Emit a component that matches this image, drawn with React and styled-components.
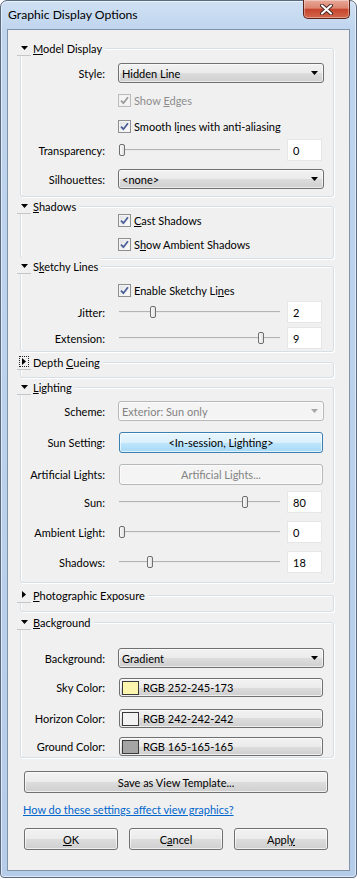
import React from 'react'
import styled, { createGlobalStyle } from 'styled-components'

const GlobalStyle = createGlobalStyle`
  html, body {
    margin: 0;
    padding: 0;
    background: #fff;
  }
  body {
    font-family: Lato, "Noto Sans", "Liberation Sans", sans-serif;
    font-size: 11px;
    color: #000;
  }
`

const Window = styled.div`
  box-sizing: border-box;
  width: 357px;
  height: 878px;
  border: 1px solid #5a6b80;
  border-radius: 7px 7px 4px 4px;
  background: linear-gradient(180deg, #cfe0f3 0px, #bfd5ee 30px, #b6cdea 100%);
  box-shadow: inset 0 0 0 1px rgba(255, 255, 255, 0.55);
  display: flex;
  flex-direction: column;
`

const TitleBar = styled.div`
  height: 28px;
  display: flex;
  justify-content: space-between;
  align-items: flex-start;
  padding-left: 7px;
`

const Title = styled.div`
  font-size: 12.2px;
  line-height: 16px;
  margin-top: 6px;
`

const CloseButton = styled.div`
  box-sizing: border-box;
  width: 47px;
  height: 19px;
  margin: -1px 6px 0 0;
  border: 1px solid #5e2218;
  border-top: none;
  border-radius: 0 0 5px 5px;
  background: linear-gradient(180deg, #e9a898 0%, #dc8670 45%, #c7452d 52%, #d2684c 100%);
  box-shadow: inset 0 0 0 1px rgba(255, 255, 255, 0.35);
  display: flex;
  align-items: center;
  justify-content: center;
`

const Client = styled.div`
  flex: 1;
  margin: 0 6px 6px 6px;
  border: 1px solid #8193a9;
  background: #f0f0f0;
  padding-left: 12px;
  display: flex;
  flex-direction: column;
`

const Box = styled.div`
  box-sizing: border-box;
  width: 314px;
  margin-top: ${p => p.$mt}px;
  padding: 0 9px ${p => p.$pb}px 0;
  border: 1px solid #d5dfe5;
  border-radius: 3px;
  box-shadow: inset 1px 1px 0 #fff, 1px 1px 0 #fff;
  display: flex;
  flex-direction: column;
`

const Header = styled.div`
  align-self: flex-start;
  height: 16px;
  margin: -9px 0 0 -4px;
  padding-right: 3px;
  background: #f0f0f0;
  display: flex;
  align-items: center;
`

const Toggle = styled.span`
  box-sizing: border-box;
  width: 14px;
  height: 16px;
  margin-right: 2px;
  border-bottom: 1px solid #c6c6c6;
  display: flex;
  align-items: center;
  justify-content: center;
`

const Focus = styled.span`
  box-sizing: border-box;
  width: 10px;
  height: 11px;
  border: 1px dotted #222;
  display: flex;
  align-items: center;
  justify-content: center;
`

const Key = styled.span`
  text-decoration: underline;
  text-underline-offset: 1px;
`

const Row = styled.div`
  display: flex;
  align-items: center;
  height: ${p => p.$h}px;
  margin-top: ${p => p.$mt}px;
  padding-left: ${p => (p.$indent ? 97 : 0)}px;
`

const Label = styled.span`
  width: 84px;
  margin-right: 13px;
  text-align: right;
  white-space: nowrap;
`

const CheckBox = styled.span`
  box-sizing: border-box;
  width: 13px;
  height: 13px;
  border: 1px solid ${p => (p.$disabled ? '#bcbcbc' : '#8e8f8f')};
  background: ${p =>
    p.$disabled
      ? '#f4f4f4'
      : 'linear-gradient(135deg, #dcdee2 0%, #f4f4f4 60%, #fcfcfc 100%)'};
  box-shadow: inset 0 0 0 1px ${p => (p.$disabled ? '#f0f0f0' : '#f4f4f4')};
  display: flex;
  align-items: center;
  justify-content: center;
`

const CheckText = styled.span`
  margin-left: 3px;
  color: ${p => (p.$disabled ? '#8d8d8d' : '#000')};
`

const Select = styled.div`
  box-sizing: border-box;
  width: 206px;
  height: 20px;
  padding: 0 5px 0 3px;
  border: 1px solid ${p => (p.$disabled ? '#b5b9bc' : '#707070')};
  border-radius: 3px;
  color: ${p => (p.$disabled ? '#838383' : '#000')};
  background: ${p =>
    p.$disabled
      ? '#f4f4f4'
      : 'linear-gradient(180deg, #f2f2f2 0%, #ebebeb 50%, #dddddd 50%, #cfcfcf 100%)'};
  box-shadow: inset 0 0 0 1px rgba(255, 255, 255, 0.6);
  display: flex;
  align-items: center;
  justify-content: space-between;
`

const Button = styled.div`
  box-sizing: border-box;
  width: ${p => p.$w}px;
  height: ${p => p.$h || 22}px;
  margin-left: ${p => p.$ml || 0}px;
  padding: 0 2px;
  border: 1px solid ${p => (p.$hot ? '#3c7fb1' : p.$disabled ? '#b5b9bc' : '#707070')};
  border-radius: 3px;
  color: ${p => (p.$disabled ? '#838383' : '#000')};
  background: ${p =>
    p.$hot
      ? 'linear-gradient(180deg, #eaf6fd 0%, #d9f0fc 50%, #bee6fd 50%, #a7d9f5 100%)'
      : p.$disabled
      ? '#f4f4f4'
      : 'linear-gradient(180deg, #f2f2f2 0%, #ebebeb 50%, #dddddd 50%, #cfcfcf 100%)'};
  box-shadow: inset 0 0 0 1px rgba(255, 255, 255, 0.65);
  display: flex;
  align-items: center;
  justify-content: ${p => (p.$left ? 'flex-start' : 'center')};
`

const Swatch = styled.span`
  box-sizing: border-box;
  width: 17px;
  height: 14px;
  margin-right: 4px;
  border: 1px solid #3a3a3a;
  background: ${p => p.$color};
`

const Slider = styled.div`
  position: relative;
  width: 161px;
  height: 14px;
  margin-left: 1px;
  display: flex;
  align-items: center;
`

const Track = styled.div`
  width: 100%;
  height: 1px;
  border-top: 1px solid #b3b3b3;
  background: #e7eaea;
`

const Thumb = styled.div`
  position: absolute;
  top: 1px;
  box-sizing: border-box;
  width: 6px;
  height: 12px;
  border: 1px solid #6f6f6f;
  border-radius: 2px;
  background: linear-gradient(90deg, #fafafa 0%, #e2e2e2 100%);
`

const NumBox = styled.div`
  box-sizing: border-box;
  width: 35px;
  height: 22px;
  margin-left: 7px;
  padding-left: 5px;
  border: 1px solid #e6e6e6;
  background: #fff;
  display: flex;
  align-items: center;
`

const Footer = styled.div`
  display: flex;
  flex-direction: column;
  padding-left: 4px;
`

const LinkText = styled.span`
  margin: 9px 0 0 -1px;
  height: 15px;
  line-height: 15px;
  color: #0066cc;
  text-decoration: underline;
  text-underline-offset: 1px;
`

const ButtonRow = styled.div`
  display: flex;
  gap: 11px;
  margin-top: 11px;
`

const DownTri = ({ color = '#000' }) => (
  <svg width="7" height="4" viewBox="0 0 7 4">
    <polygon points="0,0 7,0 3.5,4" fill={color} />
  </svg>
)

const RightTri = () => (
  <svg width="4" height="7" viewBox="0 0 4 7">
    <polygon points="0,0 4,3.5 0,7" fill="#000" />
  </svg>
)

const Check = ({ disabled }) => (
  <svg width="9" height="9" viewBox="0 0 9 9">
    <path
      d="M1 4.6 L3.4 7.2 L8 1.2"
      fill="none"
      stroke={disabled ? '#9a9a9a' : '#4a5f97'}
      strokeWidth="1.8"
    />
  </svg>
)

const Section = ({ title, open = true, focus, mt, pb, children }) => (
  <Box $mt={mt} $pb={pb}>
    <Header>
      <Toggle>
        {focus ? (
          <Focus>
            <RightTri />
          </Focus>
        ) : open ? (
          <DownTri />
        ) : (
          <RightTri />
        )}
      </Toggle>
      <span>{title}</span>
    </Header>
    {children}
  </Box>
)

const CheckRow = ({ mt, disabled, children }) => (
  <Row $h={13} $mt={mt} $indent>
    <CheckBox $disabled={disabled}>
      <Check disabled={disabled} />
    </CheckBox>
    <CheckText $disabled={disabled}>{children}</CheckText>
  </Row>
)

const SliderRow = ({ mt, label, value, max }) => (
  <Row $h={22} $mt={mt}>
    <Label>{label}</Label>
    <Slider>
      <Track />
      <Thumb style={{ left: Math.round((value / max) * 154) }} />
    </Slider>
    <NumBox>{value}</NumBox>
  </Row>
)

const SelectRow = ({ mt, label, value, disabled }) => (
  <Row $h={20} $mt={mt}>
    <Label>{label}</Label>
    <Select $disabled={disabled}>
      <span>{value}</span>
      <DownTri color={disabled ? '#a6a6a6' : '#000'} />
    </Select>
  </Row>
)

const ColorRow = ({ mt, label, color, value }) => (
  <Row $h={19} $mt={mt}>
    <Label>{label}</Label>
    <Button $w={204} $h={19} $ml={1} $left>
      <Swatch $color={color} />
      {value}
    </Button>
  </Row>
)

export default function App() {
  return (
    <>
      <GlobalStyle />
      <Window>
        <TitleBar>
          <Title>Graphic Display Options</Title>
          <CloseButton>
            <svg width="13" height="11" viewBox="0 0 13 11">
              <path d="M2 1.5 L11 9.5 M11 1.5 L2 9.5" stroke="#4a2a26" strokeWidth="4" strokeLinecap="round" />
              <path d="M2 1.5 L11 9.5 M11 1.5 L2 9.5" stroke="#fff" strokeWidth="2" strokeLinecap="round" />
            </svg>
          </CloseButton>
        </TitleBar>
        <Client>
          <Section title={<><Key>M</Key>odel Display</>} mt={18} pb={7}>
            <SelectRow mt={7} label="Style:" value="Hidden Line" />
            <CheckRow mt={11} disabled>
              Show <Key>E</Key>dges
            </CheckRow>
            <CheckRow mt={13}>
              Smooth l<Key>i</Key>nes with anti-aliasing
            </CheckRow>
            <SliderRow mt={6} label="Transparency:" value={0} max={100} />
            <SelectRow mt={8} label="Silhouettes:" value="<none>" />
          </Section>

          <Section title={<><Key>S</Key>hadows</>} mt={9} pb={7}>
            <CheckRow mt={0}>
              <Key>C</Key>ast Shadows
            </CheckRow>
            <CheckRow mt={11}>
              S<Key>h</Key>ow Ambient Shadows
            </CheckRow>
          </Section>

          <Section title={<>S<Key>k</Key>etchy Lines</>} mt={7} pb={2}>
            <CheckRow mt={10}>
              Enable Sketchy Li<Key>n</Key>es
            </CheckRow>
            <SliderRow mt={4} label="Jitter:" value={2} max={10} />
            <SliderRow mt={4} label="Extension:" value={9} max={10} />
          </Section>

          <Section title={<>Depth <Key>C</Key>ueing</>} open={false} focus mt={10} pb={7} />

          <Section title={<><Key>L</Key>ighting</>} mt={9} pb={9}>
            <SelectRow mt={6} label="Scheme:" value="Exterior: Sun only" disabled />
            <Row $h={21} $mt={11}>
              <Label>Sun Setting:</Label>
              <Button $w={204} $h={21} $ml={1} $hot>
                &lt;In-session, Lighting&gt;
              </Button>
            </Row>
            <Row $h={21} $mt={11}>
              <Label>Artificial Lights:</Label>
              <Button $w={204} $h={21} $ml={1} $disabled>
                Artificial Lights...
              </Button>
            </Row>
            <SliderRow mt={6} label="Sun:" value={80} max={100} />
            <SliderRow mt={8} label="Ambient Light:" value={0} max={100} />
            <SliderRow mt={8} label="Shadows:" value={18} max={100} />
          </Section>

          <Section title={<><Key>P</Key>hotographic Exposure</>} open={false} mt={12} pb={8} />

          <Section title={<><Key>B</Key>ackground</>} mt={10} pb={1}>
            <SelectRow mt={18} label="Background:" value="Gradient" />
            <ColorRow mt={10} label="Sky Color:" color="rgb(252,245,173)" value="RGB 252-245-173" />
            <ColorRow mt={12} label="Horizon Color:" color="rgb(242,242,242)" value="RGB 242-242-242" />
            <ColorRow mt={9} label="Ground Color:" color="rgb(165,165,165)" value="RGB 165-165-165" />
          </Section>

          <Footer>
            <Button $w={304} style={{ marginTop: 13 }}>Save as View Template...</Button>
            <LinkText>How do these settings affect view graphics?</LinkText>
            <ButtonRow>
              <Button $w={94}>
                <Key>O</Key>K
              </Button>
              <Button $w={94}>
                C<Key>a</Key>ncel
              </Button>
              <Button $w={94}>
                Appl<Key>y</Key>
              </Button>
            </ButtonRow>
          </Footer>
        </Client>
      </Window>
    </>
  )
}
